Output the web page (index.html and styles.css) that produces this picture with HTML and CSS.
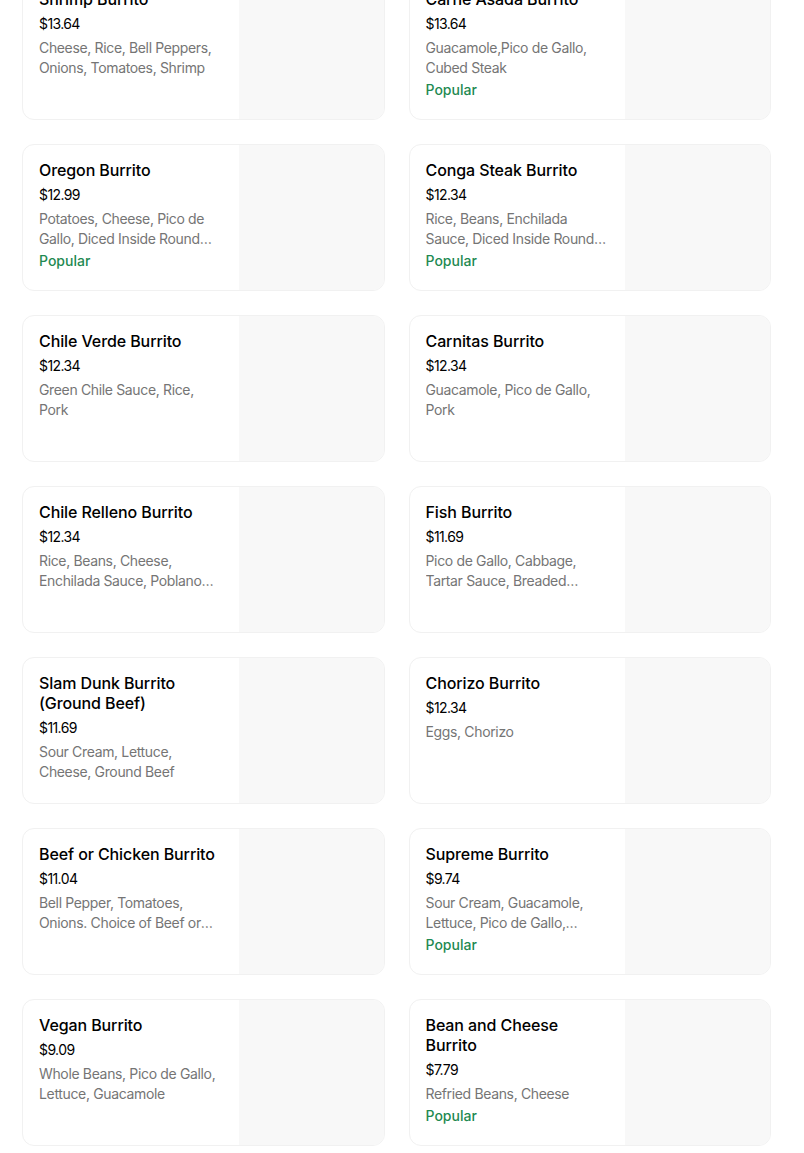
FILE: index.html
```html
<!DOCTYPE html>
<html>
<head>
<meta charset="utf-8">
<link rel="stylesheet" href="styles.css">
</head>
<body>
<div class="menu">
  <div class="card"><div class="info"><div class="title">Shrimp Burrito</div><div class="price">$13.64</div><div class="desc">Cheese, Rice, Bell Peppers, Onions, Tomatoes, Shrimp</div></div><div class="img"></div></div>
  <div class="card"><div class="info"><div class="title">Carne Asada Burrito</div><div class="price">$13.64</div><div class="desc">Guacamole,Pico de Gallo, Cubed Steak</div><div class="popular">Popular</div></div><div class="img"></div></div>

  <div class="card"><div class="info"><div class="title">Oregon Burrito</div><div class="price">$12.99</div><div class="desc">Potatoes, Cheese, Pico de Gallo, Diced Inside Round Steak</div><div class="popular">Popular</div></div><div class="img"></div></div>
  <div class="card"><div class="info"><div class="title">Conga Steak Burrito</div><div class="price">$12.34</div><div class="desc">Rice, Beans, Enchilada Sauce, Diced Inside Round Steak</div><div class="popular">Popular</div></div><div class="img"></div></div>

  <div class="card"><div class="info"><div class="title">Chile Verde Burrito</div><div class="price">$12.34</div><div class="desc">Green Chile Sauce, Rice, Pork</div></div><div class="img"></div></div>
  <div class="card"><div class="info"><div class="title">Carnitas Burrito</div><div class="price">$12.34</div><div class="desc">Guacamole, Pico de Gallo, Pork</div></div><div class="img"></div></div>

  <div class="card"><div class="info"><div class="title">Chile Relleno Burrito</div><div class="price">$12.34</div><div class="desc">Rice, Beans, Cheese, Enchilada Sauce, Poblano Pepper</div></div><div class="img"></div></div>
  <div class="card"><div class="info"><div class="title">Fish Burrito</div><div class="price">$11.69</div><div class="desc">Pico de Gallo, Cabbage, Tartar Sauce, Breaded Whitefish</div></div><div class="img"></div></div>

  <div class="card"><div class="info"><div class="title">Slam Dunk Burrito (Ground Beef)</div><div class="price">$11.69</div><div class="desc">Sour Cream, Lettuce, Cheese, Ground Beef</div></div><div class="img"></div></div>
  <div class="card"><div class="info"><div class="title">Chorizo Burrito</div><div class="price">$12.34</div><div class="desc">Eggs, Chorizo</div></div><div class="img"></div></div>

  <div class="card"><div class="info"><div class="title">Beef or Chicken Burrito</div><div class="price">$11.04</div><div class="desc">Bell Pepper, Tomatoes, Onions. Choice of Beef or Chicken</div></div><div class="img"></div></div>
  <div class="card"><div class="info"><div class="title">Supreme Burrito</div><div class="price">$9.74</div><div class="desc">Sour Cream, Guacamole, Lettuce, Pico de Gallo, Cheese</div><div class="popular">Popular</div></div><div class="img"></div></div>

  <div class="card"><div class="info"><div class="title">Vegan Burrito</div><div class="price">$9.09</div><div class="desc">Whole Beans, Pico de Gallo, Lettuce, Guacamole</div></div><div class="img"></div></div>
  <div class="card"><div class="info"><div class="title">Bean and Cheese Burrito</div><div class="price">$7.79</div><div class="desc">Refried Beans, Cheese</div><div class="popular">Popular</div></div><div class="img"></div></div>
</div>
</body>
</html>
```

FILE: styles.css
```css
html, body {
  margin: 0;
  padding: 0;
  background: #ffffff;
}
body {
  font-family: Inter, "Liberation Sans", sans-serif;
  color: #000000;
  overflow: hidden;
}
.menu {
  width: 749px;
  margin: -27px 0 0 22px;
  display: grid;
  grid-template-columns: 1fr 1fr;
  column-gap: 24px;
  row-gap: 24px;
}
.card {
  height: 147px;
  box-sizing: border-box;
  border: 1px solid #f1f1f1;
  border-radius: 12px;
  display: flex;
  overflow: hidden;
  background: #ffffff;
}
.info {
  flex: 1 1 auto;
  min-width: 0;
  padding: 15px 16px 16px;
}
.img {
  flex: 0 0 145px;
  background: #f8f8f8;
}
.title {
  font-size: 16px;
  line-height: 20px;
  font-weight: 500;
  letter-spacing: -0.1px;
  color: #000000;
}
.price {
  margin-top: 5px;
  font-size: 14px;
  line-height: 20px;
  color: #000000;
  letter-spacing: -0.6px;
}
.desc {
  margin-top: 4px;
  font-size: 14px;
  line-height: 20px;
  color: #757575;
  letter-spacing: -0.35px;
  display: -webkit-box;
  -webkit-line-clamp: 2;
  -webkit-box-orient: vertical;
  overflow: hidden;
}
.popular {
  margin-top: 2px;
  font-size: 14px;
  line-height: 20px;
  font-weight: 500;
  color: #1f8a52;
}
```
